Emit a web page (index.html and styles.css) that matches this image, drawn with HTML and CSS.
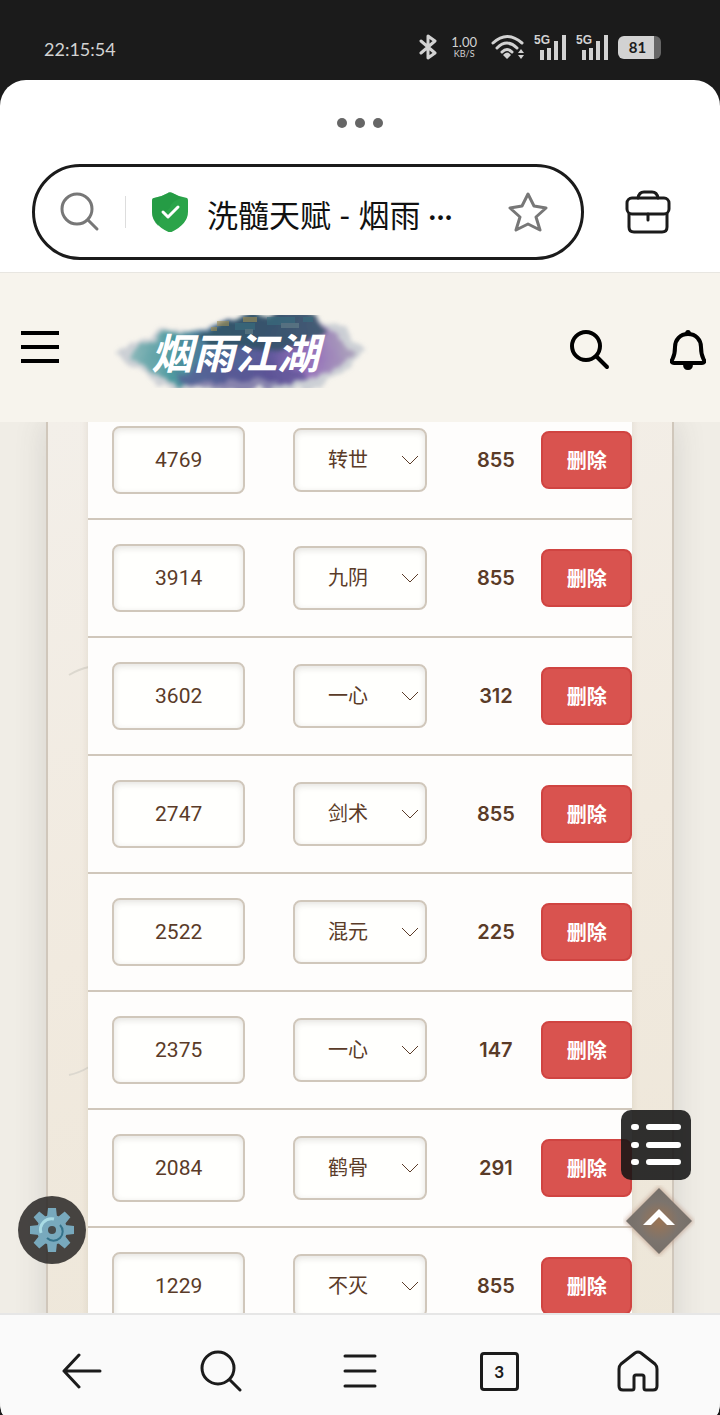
FILE: index.html
```html
<!DOCTYPE html>
<html lang="zh-CN">
<head>
<meta charset="utf-8">
<meta name="viewport" content="width=device-width, initial-scale=1">
<title>洗髓天赋 - 烟雨江湖</title>
<link rel="stylesheet" href="styles.css">
</head>
<body>
<div class="status">
  <time class="clock">22:15:54</time>
  <div class="status-icons">
    <svg width="18" height="26" viewBox="0 0 18 26" class="line"><path d="M2 7l14 12-7 5V2l7 5L2 19" stroke-width="3"/></svg>
    <div class="speed"><span class="rate">1.00</span><span class="unit">KB/S</span></div>
    <svg width="34" height="26" viewBox="0 0 34 26"><g class="line" stroke-width="3"><path d="M2 9Q16 -4 31 9M6 14Q16 4 26 14M11 18Q16 13 21 18"/></g><path fill="currentColor" d="M12 21q4-5 8 0l-4 4zM27 19l3-4 3 4zM27 21l3 4 3-4z"/></svg>
    <div class="cell"><span>5G</span><svg width="27" height="26" viewBox="0 0 27 26"><path fill="currentColor" d="M0 16h4v10H0zM7 14h4v12H7zM14 7h4v19h-4zM22 1h4v25h-4z"/></svg></div>
    <div class="cell"><span>5G</span><svg width="27" height="26" viewBox="0 0 27 26"><path fill="currentColor" d="M0 16h4v10H0zM7 14h4v12H7zM14 7h4v19h-4zM22 1h4v25h-4z"/></svg></div>
    <div class="battery">81</div>
  </div>
</div>

<div class="sheet">
  <div class="toolbar">
    <button class="dots" aria-label="更多"><i></i><i></i><i></i></button>
    <div class="address-row">
      <div class="address">
        <svg width="40" height="40" viewBox="0 0 40 40" class="line grey"><circle cx="17" cy="17" r="15" stroke-width="3"/><path d="M28 28l9 9" stroke-width="3"/></svg>
        <span class="rule"></span>
        <svg width="36" height="40" viewBox="0 0 36 40"><path fill="#2ba44a" d="M16 .8q2-1 4 0 7 4 14 5 2 0 2 3v11q0 12-16 20-2 1-4 0Q0 32 0 20V9q0-3 2-3 7-1 14-5z"/><path fill="#1f9440" d="M16 .8q2-1 4 0 7 4 10 5-12 4-12 10l-9 9-3 9Q0 28 0 20V9q0-3 2-3 7-1 14-5z" opacity=".5"/><path d="M11 20l5 5 10-10" class="line white" stroke-width="3"/></svg>
        <span class="page-title">洗髓天赋 - 烟雨 ···</span>
        <button class="icon-btn" aria-label="收藏"><svg width="40" height="40" viewBox="0 0 40 40" class="line grey" stroke-width="3"><path d="M20 2l6 12 12 2-10 9 4 13-12-6-12 6 4-13L2 16l12-2z"/></svg></button>
      </div>
      <button class="icon-btn" aria-label="工具箱"><svg width="46" height="44" viewBox="0 0 46 44" class="line dark" stroke-width="3"><rect x="2" y="8" width="42" height="16" rx="5"/><path d="M4 24v13q0 5 5 5h28q5 0 5-5V24M13 8q1-6 6-6h8q5 0 6 6M23 24v6"/></svg></button>
    </div>
  </div>

  <header class="site-head">
    <button class="icon-btn" aria-label="菜单"><svg width="38" height="38" viewBox="0 0 38 38"><path d="M0 0h38v4H0zM0 14h38v4H0zM0 28h38v4H0z"/></svg></button>
    <a class="logo" href="#" aria-label="烟雨江湖">
      <svg width="256" height="84" viewBox="0 0 256 84">
        <defs>
          <linearGradient id="ink" x1="0" x2="1"><stop offset="0" stop-color="#86b6b7"/><stop offset=".2" stop-color="#3e9399"/><stop offset=".42" stop-color="#3d5d90"/><stop offset=".62" stop-color="#534a95"/><stop offset=".8" stop-color="#9067b8"/><stop offset="1" stop-color="#aaa2b8"/></linearGradient>
          <filter id="wash" x="-10%" y="-20%" width="120%" height="140%"><feTurbulence type="fractalNoise" baseFrequency=".05" numOctaves="4" seed="8" result="n"/><feDisplacementMap in="SourceGraphic" in2="n" scale="20" xChannelSelector="R" yChannelSelector="G"/><feGaussianBlur stdDeviation="2"/></filter>
          <clipPath id="band"><rect y="7" width="256" height="73"/></clipPath>
        </defs>
        <g clip-path="url(#band)">
          <g filter="url(#wash)">
            <path d="M4 46Q34 20 80 22L134 6h72l28 18 18 22-20 18-38 20-50-2-80 2-36-18z" fill="#8d9cb2" opacity=".4"/>
            <path d="M16 46Q40 24 82 24L135 5h68l20 22 18 22-22 14-30 12-60-2-66 4-28-14z" fill="url(#ink)" opacity=".9"/>
            <path d="M84 28L136 3h66l14 23-50 18-70-4z" fill="#2d5362" opacity=".8"/>
            <path d="M62 66q40-14 100-10l40 16-60 10-60-2z" fill="#5b5494" opacity=".6"/>
          </g>
          <g opacity=".6"><path fill="#a39155" d="M104 13h12v5h-12zM130 9h14v5h-14zM98 19h6v4h-6z"/><path fill="#396f7f" d="M122 15h20v7h-20zM154 9h28v8h-28zM190 9h10v5h-10z"/><path fill="#67838b" d="M168 15h18v5h-18zM132 21h8v5h-8z"/></g>
        </g>
        <text x="38" y="61" class="logo-text">烟雨江湖</text>
      </svg>
    </a>
    <button class="icon-btn find" aria-label="搜索"><svg width="40" height="40" viewBox="0 0 40 40" class="line black" stroke-width="4"><circle cx="16" cy="16" r="14"/><path d="M27 27l10 10"/></svg></button>
    <button class="icon-btn" aria-label="通知"><svg width="36" height="40" viewBox="0 0 36 40"><path class="line black" stroke-width="4" d="M18 4C10 4 5 10 5 17c0 8-1 9-3 13q-1 3 2 3h28q3 0 2-3c-2-4-3-5-3-13C31 10 26 4 18 4z"/><path d="M13 34h10q0 6-5 6t-5-6zM15 4q0-4 3-4t3 4z"/></svg></button>
  </header>

  <main class="view">
    <div class="card">
      <svg class="swirl" width="22" height="420" viewBox="0 0 22 420"><path d="M1 9Q11 3 21 1M1 409q10-2 20-8" fill="none" stroke="#dcd8cf" stroke-width="2"/></svg>
      <table class="grid">
        <colgroup><col class="wide"><col class="wide"><col><col></colgroup>
        <tbody>
          <tr><td><input class="field" aria-label="数值" value="4769"></td><td><div class="pick"><select class="field" aria-label="天赋"><option>转世</option></select><svg width="18" height="10" viewBox="0 0 18 10"><path d="M1 1l8 8 8-8"/></svg></div></td><td class="sum">855</td><td class="act"><button class="del">删除</button></td></tr>
          <tr><td><input class="field" aria-label="数值" value="3914"></td><td><div class="pick"><select class="field" aria-label="天赋"><option>九阴</option></select><svg width="18" height="10" viewBox="0 0 18 10"><path d="M1 1l8 8 8-8"/></svg></div></td><td class="sum">855</td><td class="act"><button class="del">删除</button></td></tr>
          <tr><td><input class="field" aria-label="数值" value="3602"></td><td><div class="pick"><select class="field" aria-label="天赋"><option>一心</option></select><svg width="18" height="10" viewBox="0 0 18 10"><path d="M1 1l8 8 8-8"/></svg></div></td><td class="sum">312</td><td class="act"><button class="del">删除</button></td></tr>
          <tr><td><input class="field" aria-label="数值" value="2747"></td><td><div class="pick"><select class="field" aria-label="天赋"><option>剑术</option></select><svg width="18" height="10" viewBox="0 0 18 10"><path d="M1 1l8 8 8-8"/></svg></div></td><td class="sum">855</td><td class="act"><button class="del">删除</button></td></tr>
          <tr><td><input class="field" aria-label="数值" value="2522"></td><td><div class="pick"><select class="field" aria-label="天赋"><option>混元</option></select><svg width="18" height="10" viewBox="0 0 18 10"><path d="M1 1l8 8 8-8"/></svg></div></td><td class="sum">225</td><td class="act"><button class="del">删除</button></td></tr>
          <tr><td><input class="field" aria-label="数值" value="2375"></td><td><div class="pick"><select class="field" aria-label="天赋"><option>一心</option></select><svg width="18" height="10" viewBox="0 0 18 10"><path d="M1 1l8 8 8-8"/></svg></div></td><td class="sum">147</td><td class="act"><button class="del">删除</button></td></tr>
          <tr><td><input class="field" aria-label="数值" value="2084"></td><td><div class="pick"><select class="field" aria-label="天赋"><option>鹤骨</option></select><svg width="18" height="10" viewBox="0 0 18 10"><path d="M1 1l8 8 8-8"/></svg></div></td><td class="sum">291</td><td class="act"><button class="del">删除</button></td></tr>
          <tr><td><input class="field" aria-label="数值" value="1229"></td><td><div class="pick"><select class="field" aria-label="天赋"><option>不灭</option></select><svg width="18" height="10" viewBox="0 0 18 10"><path d="M1 1l8 8 8-8"/></svg></div></td><td class="sum">855</td><td class="act"><button class="del">删除</button></td></tr>
        </tbody>
      </table>
    </div>
    <button class="float gear" aria-label="设置"><svg width="44" height="44" viewBox="-22 -22 44 44"><g fill="#78a9bd"><circle r="15"/><path d="M-4-22h8l1 9H-5zM-4 22h8l1-9H-5zM-22-4v8l9 1V-5zM22-4v8l-9 1V-5z"/><path transform="rotate(45)" d="M-4-22h8l1 9H-5zM-4 22h8l1-9H-5zM-22-4v8l9 1V-5zM22-4v8l-9 1V-5z"/></g><path d="M-11 3A11 11 0 0 1 2-11" fill="none" stroke="#a9dbe4" stroke-width="3"/><path d="M8-5A9 9 0 0 1-5 8" fill="none" stroke="#34728a" stroke-width="2"/><circle r="4" fill="#45494a"/></svg></button>
    <button class="float list" aria-label="目录"><svg width="50" height="42" viewBox="0 0 50 42" class="line white" stroke-width="6"><path d="M3 3h2M18 3h29M3 21h2M18 21h29M3 38h2M18 38h29"/></svg></button>
    <button class="float top" aria-label="返回顶部"><svg width="72" height="72" viewBox="0 0 72 72"><defs><radialGradient id="glow"><stop offset="0" stop-color="#98704f"/><stop offset=".6" stop-color="#77706a"/><stop offset="1" stop-color="#706b66"/></radialGradient><filter id="soft"><feGaussianBlur stdDeviation="2"/></filter></defs><path d="M36 1l35 35-35 35L1 36z" fill="#b3907c" opacity=".6" filter="url(#soft)"/><path d="M36 3l33 33-33 33L3 36z" fill="url(#glow)" opacity=".94"/><path d="M20 40l16-16 16 16h-8l-8-8-8 8z" fill="#fff"/></svg></button>
  </main>

  <nav class="bottom">
    <button class="icon-btn" aria-label="后退"><svg width="40" height="36" viewBox="0 0 40 36" class="line dark" stroke-width="3"><path d="M38 18H2M17 2L2 18l15 16"/></svg></button>
    <button class="icon-btn" aria-label="搜索"><svg width="42" height="42" viewBox="0 0 42 42" class="line dark" stroke-width="3"><circle cx="18" cy="18" r="16"/><path d="M30 30l10 10"/></svg></button>
    <button class="icon-btn" aria-label="菜单"><svg width="34" height="34" viewBox="0 0 34 34" class="line dark" stroke-width="3"><path d="M2 2h30M2 17h30M2 32h30"/></svg></button>
    <button class="tabs" aria-label="3 个标签页">3</button>
    <button class="icon-btn" aria-label="主页"><svg width="42" height="42" viewBox="0 0 42 42" class="line dark" stroke-width="3"><path d="M18 3q3-2 6 0l14 11q2 2 2 5v17q0 4-4 4h-7q-2 0-2-2V27q0-2-2-2h-6q-2 0-2 2v11q0 2-2 2H6q-4 0-4-4V19q0-3 2-5z"/></svg></button>
  </nav>
</div>
</body>
</html>
```

FILE: styles.css
```css
* { box-sizing: border-box; }
body {
  margin: 0;
  height: 100vh;
  display: flex;
  flex-direction: column;
  background: #1b1b1b;
  font-family: Inter, "Noto Sans CJK SC", sans-serif;
  color: #5a3b28;
}
button { padding: 0; border: 0; background: none; font: inherit; color: inherit; }
svg { display: block; flex: none; }
.line { fill: none; stroke: currentColor; stroke-linecap: round; stroke-linejoin: round; }
.grey { color: #777; }
.dark { color: #1b1b1b; }
.black { color: #000; }
.white { color: #fff; }
.icon-btn { display: flex; align-items: center; justify-content: center; }

.status {
  height: 80px;
  flex: none;
  display: flex;
  align-items: center;
  justify-content: space-between;
  padding: 14px 59px 0 44px;
  color: #d2d2d2;
  font-family: Lato, sans-serif;
}
.clock { font-size: 18px; padding-top: 4px; }
.status-icons { display: flex; align-items: center; gap: 9px; }
.speed { display: flex; flex-direction: column; align-items: center; margin: 0 5px; }
.rate { font-size: 13px; line-height: 14px; }
.unit { font-size: 9px; line-height: 10px; }
.cell { position: relative; padding-left: 6px; }
.cell span { position: absolute; left: 0; top: 0; font: bold 12px/12px "Liberation Sans", sans-serif; }
.battery {
  width: 43px;
  height: 23px;
  border-radius: 6px;
  background: linear-gradient(90deg, #d2d2d2 36px, #666 36px);
  color: #1b1b1b;
  font-size: 15px;
  font-weight: bold;
  line-height: 23px;
  text-align: center;
  padding-right: 4px;
}

.sheet {
  flex: 1;
  min-height: 0;
  display: flex;
  flex-direction: column;
  overflow: hidden;
  background: #fff;
  border-radius: 26px 26px 4px 4px / 26px 26px 14px 14px;
}
.toolbar { flex: none; padding: 38px 0 12px; border-bottom: 1px solid #e8e6e1; }
.dots { display: flex; gap: 8px; margin: 0 auto 36px; }
.dots i { width: 10px; height: 10px; border-radius: 50%; background: #666; }
.address-row { display: flex; align-items: center; gap: 41px; padding: 0 49px 0 32px; }
.address {
  flex: 1;
  min-width: 0;
  height: 96px;
  border: 3px solid #1b1b1b;
  border-radius: 48px;
  display: flex;
  align-items: center;
  padding: 0 33px 0 25px;
}
.rule { width: 1px; height: 32px; margin: 0 26px 0 25px; background: #ddd; }
.page-title {
  flex: 1;
  min-width: 0;
  margin-left: 19px;
  padding-top: 6px;
  color: #111;
  font: 31px/40px Lato, "Noto Sans CJK SC", sans-serif;
  white-space: nowrap;
  overflow: hidden;
}

.site-head {
  flex: none;
  height: 149px;
  display: flex;
  align-items: center;
  padding: 4px 14px 0 21px;
  background: #f7f4ed;
}
.logo { margin-left: 54px; }
.logo-text { font: italic bold 42px "Noto Sans CJK SC", sans-serif; fill: #fff; }
.find { margin-left: auto; margin-right: 60px; }

.view {
  flex: 1;
  min-height: 0;
  position: relative;
  overflow: hidden;
  background: #f0ede6;
}
.card {
  display: flow-root;
  position: relative;
  min-height: 100%;
  margin: 0 46px;
  padding: 0 40px;
  border: solid #d0c7bb;
  border-width: 0 2px;
  background: linear-gradient(165deg, #f3efe9, #f1eadf 50%, #ede6d8);
  box-shadow: 0 0 30px rgba(70, 70, 70, .16);
}
.swirl { position: absolute; left: 20px; top: 244px; }
.grid {
  position: relative;
  width: 100%;
  margin-top: -20px;
  table-layout: fixed;
  border-collapse: separate;
  border-spacing: 0;
  background: #fefdfc;
  box-shadow: 0 0 8px rgba(90, 70, 40, .12);
}
.wide { width: 33.33%; }
.grid td { height: 118px; padding: 0 24px; border-bottom: 2px solid #d0c7bb; vertical-align: middle; }
.field {
  display: block;
  width: 100%;
  height: 68px;
  margin: 0;
  padding: 0;
  border: 2px solid #d0c7bb;
  border-radius: 8px;
  background: #fffffd;
  box-shadow: inset 0 2px 6px rgba(60, 50, 40, .14);
  color: #5a3b28;
  font: 21px Roboto, "Noto Sans CJK SC", sans-serif;
  text-align: center;
}
.pick { position: relative; }
.pick .field { height: 64px; padding-right: 24px; appearance: none; font-size: 20px; text-align-last: center; }
.pick svg { position: absolute; right: 8px; top: 27px; fill: none; stroke: #5a3b28; pointer-events: none; }
.grid .sum { padding: 0; text-align: center; font-size: 20px; font-weight: 600; }
.grid .act { padding: 0; }
.del {
  display: block;
  width: 100%;
  height: 58px;
  padding-bottom: 2px;
  border: 2px solid #d04441;
  border-radius: 8px;
  background: #d9534f;
  color: #fff;
  font-size: 20px;
  font-weight: bold;
}

.float { position: absolute; display: flex; align-items: center; justify-content: center; }
.gear { left: 18px; bottom: 49px; width: 68px; height: 68px; border-radius: 50%; background: rgba(40, 38, 36, .85); }
.list { right: 29px; bottom: 133px; width: 70px; height: 70px; border-radius: 10px; background: rgba(20, 20, 20, .88); }
.top { right: 25px; bottom: 56px; }

.bottom {
  flex: none;
  height: 102px;
  display: grid;
  grid-template-columns: repeat(5, 1fr);
  align-items: center;
  justify-items: center;
  padding: 12px 12px 0;
  border-top: 2px solid #e6e6e6;
  background: #fafafa;
}
.tabs {
  width: 39px;
  height: 39px;
  border: 3px solid #1b1b1b;
  border-radius: 4px;
  color: #1b1b1b;
  font: bold 17px Lato, sans-serif;
}
```
